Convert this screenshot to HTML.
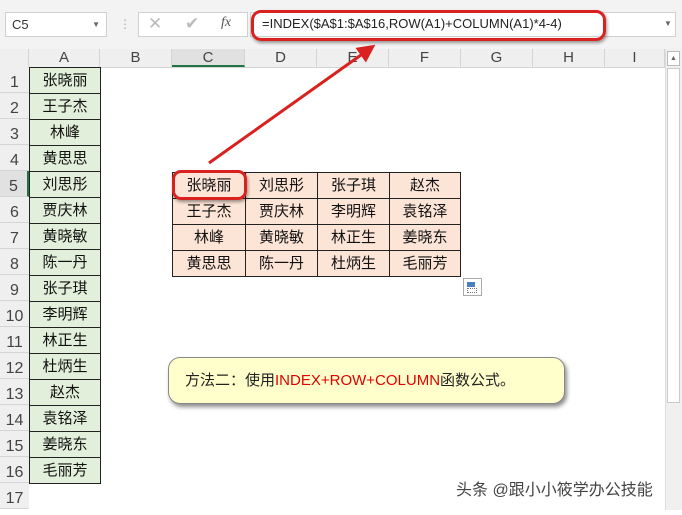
<!DOCTYPE html>
<html><head><meta charset="utf-8"><style>
*{margin:0;padding:0;box-sizing:border-box}
body{width:682px;height:510px;overflow:hidden;background:#fff;position:relative;font-family:"Liberation Sans","Noto Sans CJK SC",sans-serif}
.abs{position:absolute}
.ch{position:absolute;top:49px;height:18px;font-size:15px;color:#444;text-align:center;line-height:18px;border-right:1px solid #d4d4d4;background:#efefef}
.rh{position:absolute;left:0;width:29px;height:26px;font-size:16px;color:#444;text-align:center;line-height:32px;border-bottom:1px solid #d4d4d4;background:#efefef}
.ca{position:absolute;left:29px;width:72px;height:27px;border:1px solid #222;background:#e2efda;font-size:15px;text-align:center;line-height:25px;color:#111}
.t{position:absolute;height:27px;border:1px solid #222;background:#fce4d6;font-size:15px;text-align:center;line-height:25px;color:#111}
</style></head><body>
<div class="abs" style="left:0;top:0;width:682px;height:49px;background:#f3f3f3"></div>
<div class="abs" style="left:5px;top:12px;width:102px;height:25px;background:#fff;border:1px solid #d0d0d0;font-size:13px;line-height:23px;padding-left:6px;color:#333">C5<span style="position:absolute;right:6px;font-size:8px;color:#666">▼</span></div>
<div class="abs" style="left:119px;top:17px;color:#aaa;font-size:12px">⋮</div>
<div class="abs" style="left:138px;top:12px;width:110px;height:25px;background:#fff;border:1px solid #d0d0d0"></div>
<div class="abs" style="left:148px;top:14px;color:#bbb;font-size:17px">✕</div>
<div class="abs" style="left:185px;top:14px;color:#bbb;font-size:17px">✔</div>
<div class="abs" style="left:221px;top:15px;color:#555;font-size:14px;font-style:italic;font-family:'Liberation Serif',serif">fx</div>
<div class="abs" style="left:250px;top:12px;width:426px;height:25px;background:#fff;border:1px solid #d0d0d0"></div>
<div class="abs" style="left:262px;top:16px;font-size:13px;color:#222">=INDEX($A$1:$A$16,ROW(A1)+COLUMN(A1)*4-4)</div>
<div class="abs" style="left:664px;top:19px;font-size:8px;color:#666">▼</div>
<div class="abs" style="left:251px;top:10px;width:355px;height:31px;border:3px solid #d9221f;border-radius:10px;box-shadow:1px 2px 3px rgba(0,0,0,.4)"></div>
<div class="abs" style="left:0;top:49px;width:29px;height:18px;background:#efefef;border-right:1px solid #d4d4d4"></div>
<div class="ch" style="left:29px;width:71px">A</div>
<div class="ch" style="left:100px;width:72px">B</div>
<div class="ch" style="left:172px;width:73px;background:#e1e1e1;border-bottom:2px solid #217346">C</div>
<div class="ch" style="left:245px;width:72px">D</div>
<div class="ch" style="left:317px;width:72px">E</div>
<div class="ch" style="left:389px;width:72px">F</div>
<div class="ch" style="left:461px;width:72px">G</div>
<div class="ch" style="left:533px;width:72px">H</div>
<div class="ch" style="left:605px;width:60px">I</div>
<div class="abs" style="left:0;top:67px;width:665px;height:1px;background:#d4d4d4"></div>
<div class="abs" style="left:665px;top:49px;width:17px;height:461px;background:#f0f0f0;border-left:1px solid #ddd"></div>
<div class="abs" style="left:667px;top:51px;width:13px;height:15px;border:1px solid #bbb;background:#fff;font-size:7px;text-align:center;line-height:13px;color:#666">▲</div>
<div class="abs" style="left:667px;top:68px;width:13px;height:335px;border:1px solid #ccc;background:#fff"></div>
<div class="rh" style="top:67px">1</div><div class="rh" style="top:93px">2</div><div class="rh" style="top:119px">3</div><div class="rh" style="top:145px">4</div><div class="rh" style="top:171px;background:#e1e1e1;border-right:2px solid #217346">5</div><div class="rh" style="top:197px">6</div><div class="rh" style="top:223px">7</div><div class="rh" style="top:249px">8</div><div class="rh" style="top:275px">9</div><div class="rh" style="top:301px">10</div><div class="rh" style="top:327px">11</div><div class="rh" style="top:353px">12</div><div class="rh" style="top:379px">13</div><div class="rh" style="top:405px">14</div><div class="rh" style="top:431px">15</div><div class="rh" style="top:457px">16</div><div class="rh" style="top:483px">17</div>
<div class="ca" style="top:67px">张晓丽</div><div class="ca" style="top:93px">王子杰</div><div class="ca" style="top:119px">林峰</div><div class="ca" style="top:145px">黄思思</div><div class="ca" style="top:171px">刘思彤</div><div class="ca" style="top:197px">贾庆林</div><div class="ca" style="top:223px">黄晓敏</div><div class="ca" style="top:249px">陈一丹</div><div class="ca" style="top:275px">张子琪</div><div class="ca" style="top:301px">李明辉</div><div class="ca" style="top:327px">林正生</div><div class="ca" style="top:353px">杜炳生</div><div class="ca" style="top:379px">赵杰</div><div class="ca" style="top:405px">袁铭泽</div><div class="ca" style="top:431px">姜晓东</div><div class="ca" style="top:457px">毛丽芳</div>

<div class="t" style="left:172px;top:172px;width:74px">张晓丽</div><div class="t" style="left:245px;top:172px;width:73px">刘思彤</div><div class="t" style="left:317px;top:172px;width:73px">张子琪</div><div class="t" style="left:389px;top:172px;width:72px">赵杰</div>
<div class="t" style="left:172px;top:198px;width:74px">王子杰</div><div class="t" style="left:245px;top:198px;width:73px">贾庆林</div><div class="t" style="left:317px;top:198px;width:73px">李明辉</div><div class="t" style="left:389px;top:198px;width:72px">袁铭泽</div>
<div class="t" style="left:172px;top:224px;width:74px">林峰</div><div class="t" style="left:245px;top:224px;width:73px">黄晓敏</div><div class="t" style="left:317px;top:224px;width:73px">林正生</div><div class="t" style="left:389px;top:224px;width:72px">姜晓东</div>
<div class="t" style="left:172px;top:250px;width:74px">黄思思</div><div class="t" style="left:245px;top:250px;width:73px">陈一丹</div><div class="t" style="left:317px;top:250px;width:73px">杜炳生</div><div class="t" style="left:389px;top:250px;width:72px">毛丽芳</div>
<div class="abs" style="left:172px;top:170px;width:75px;height:30px;border:3px solid #d9221f;border-radius:9px;box-shadow:1px 2px 3px rgba(0,0,0,.4)"></div>
<div class="abs" style="left:463px;top:278px;width:19px;height:18px;border:1px solid #aaa;background:#fff"><div style="position:absolute;left:3px;top:3px;width:8px;height:5px;background:#4a7fc1"></div><div style="position:absolute;left:3px;top:9px;width:10px;height:5px;border:1px dotted #777"></div></div>
<svg class="abs" style="left:0;top:0" width="682" height="510"><defs><marker id="m" markerWidth="6" markerHeight="6" refX="3" refY="3" orient="auto"><path d="M0,0L6,3L0,6z" fill="#d9221f"/></marker></defs>
<line x1="209" y1="163" x2="368" y2="50" stroke="#d9221f" stroke-width="3" marker-end="url(#m)"/></svg>
<div class="abs" style="left:168px;top:357px;width:397px;height:47px;background:#ffffcc;border:1px solid #888;border-radius:12px;box-shadow:2px 3px 4px rgba(0,0,0,.45);font-size:15px;line-height:45px;padding-left:16px;color:#222">方法二：使用<span style="color:#e00000">INDEX+ROW+COLUMN</span>函数公式。</div>
<div class="abs" style="left:456px;top:476px;font-size:16px;color:#444;text-shadow:0 0 2px #fff">头条 @跟小小筱学办公技能</div>
</body></html>
